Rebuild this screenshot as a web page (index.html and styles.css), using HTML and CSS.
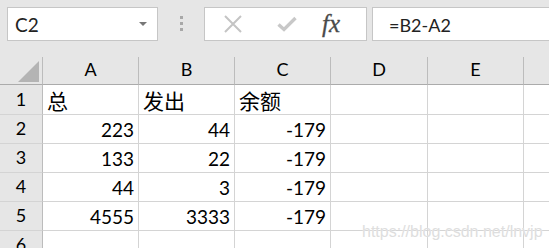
FILE: index.html
```html
<!DOCTYPE html>
<html lang="zh-CN">
<head>
    <meta charset="UTF-8">
    <title>Sheet</title>
    <link rel="stylesheet" href="styles.css">
</head>
<body>
    <div class="app">
        <div class="toolbar">
            <div class="name-box">
                <span>C2</span>
                <span class="caret"></span>
            </div>
            <div class="grip">
                <span></span><span></span><span></span>
            </div>
            <div class="fx-box">
                <svg class="icon" width="20" height="18" viewBox="0 0 20 18">
                    <path d="M2 1 L18 17 M18 1 L2 17" stroke="#c4c4c4" stroke-width="2" fill="none"/>
                </svg>
                <svg class="icon" width="20" height="16" viewBox="0 0 20 16">
                    <path d="M1.5 8.5 L7 13.5 L18.5 2" stroke="#c8c8c8" stroke-width="3.4" fill="none"/>
                </svg>
                <span class="fx">fx</span>
            </div>
            <div class="formula">=B2-A2</div>
        </div>

        <div class="sheet">
            <div class="corner"><span class="tri"></span></div>
            <div class="col-head">A</div>
            <div class="col-head">B</div>
            <div class="col-head">C</div>
            <div class="col-head">D</div>
            <div class="col-head">E</div>
            <div class="col-head last"></div>

            <div class="row-head">1</div>
            <div class="cell cjk">总</div>
            <div class="cell cjk">发出</div>
            <div class="cell cjk">余额</div>
            <div class="cell"></div>
            <div class="cell"></div>
            <div class="cell last"></div>

            <div class="row-head">2</div>
            <div class="cell num">223</div>
            <div class="cell num">44</div>
            <div class="cell num">-179</div>
            <div class="cell"></div>
            <div class="cell"></div>
            <div class="cell last"></div>

            <div class="row-head">3</div>
            <div class="cell num">133</div>
            <div class="cell num">22</div>
            <div class="cell num">-179</div>
            <div class="cell"></div>
            <div class="cell"></div>
            <div class="cell last"></div>

            <div class="row-head">4</div>
            <div class="cell num">44</div>
            <div class="cell num">3</div>
            <div class="cell num">-179</div>
            <div class="cell"></div>
            <div class="cell"></div>
            <div class="cell last"></div>

            <div class="row-head">5</div>
            <div class="cell num">4555</div>
            <div class="cell num">3333</div>
            <div class="cell num">-179</div>
            <div class="cell"></div>
            <div class="cell"></div>
            <div class="cell last"></div>

            <div class="row-head">6</div>
            <div class="cell"></div>
            <div class="cell"></div>
            <div class="cell"></div>
            <div class="cell"></div>
            <div class="cell"></div>
            <div class="cell last"></div>
        </div>

        <div class="watermark">https://blog.csdn.net/lnvjp</div>
    </div>
</body>
</html>
```

FILE: styles.css
```css
body {
    margin: 0;
    background-color: #e6e6e6;
    font-family: Lato, "Noto Sans CJK SC", sans-serif;
    color: #000;
}

.app {
    position: relative;
    width: 549px;
    height: 248px;
    overflow: hidden;
}

/* formula bar */
.toolbar {
    display: flex;
    height: 57px;
    padding: 7px 0 0 7px;
    box-sizing: border-box;
}

.name-box {
    display: flex;
    align-items: center;
    justify-content: space-between;
    width: 151px;
    height: 34px;
    box-sizing: border-box;
    padding: 0 10px 0 7px;
    background-color: #fff;
    border: 1px solid #c6c6c6;
    font-size: 19px;
    color: #222;
}

.caret {
    width: 0;
    height: 0;
    border-left: 4px solid transparent;
    border-right: 4px solid transparent;
    border-top: 4px solid #777;
}

.grip {
    display: flex;
    flex-direction: column;
    align-items: center;
    gap: 3px;
    width: 46px;
    padding-top: 9px;
    box-sizing: border-box;
}

.grip span {
    width: 3px;
    height: 3px;
    background-color: #a8a8a8;
}

.fx-box {
    display: flex;
    align-items: center;
    width: 163px;
    height: 34px;
    box-sizing: border-box;
    padding-left: 18px;
    background-color: #fff;
    border: 1px solid #c6c6c6;
}

.icon {
    margin-right: 34px;
}

.fx {
    margin-left: -9px;
    font-family: "Liberation Serif", serif;
    font-style: italic;
    font-size: 25px;
    color: #4a4a4a;
    -webkit-text-stroke: 0.3px #4a4a4a;
}

.formula {
    flex: 1;
    height: 34px;
    margin-left: 5px;
    box-sizing: border-box;
    padding: 6px 0 0 16px;
    background-color: #fff;
    border: 1px solid #c6c6c6;
    border-right: none;
    font-size: 18px;
    color: #222;
}

/* grid */
.sheet {
    display: grid;
    grid-template-columns: 43px 96px 96px 96px 97px 96px 1fr;
    grid-template-rows: 28px 30px 29px 29px 29px 29px 29px;
    background-color: #fff;
}

.corner,
.col-head,
.row-head {
    background-color: #e6e6e6;
    box-sizing: border-box;
}

.corner {
    display: flex;
    align-items: flex-end;
    justify-content: flex-end;
    padding: 0 3px 2px 0;
    border-right: 1px solid #bcbcbc;
    border-bottom: 1px solid #ababab;
}

.tri {
    width: 0;
    height: 0;
    border-left: 21px solid transparent;
    border-bottom: 21px solid #b4b4b4;
}

.col-head {
    display: flex;
    align-items: flex-end;
    justify-content: center;
    padding-bottom: 4px;
    font-size: 18px;
    border-right: 1px solid #bcbcbc;
    border-bottom: 1px solid #ababab;
}

.row-head {
    display: flex;
    align-items: flex-end;
    justify-content: center;
    padding-bottom: 4px;
    font-size: 18px;
    border-right: 1px solid #bcbcbc;
    border-bottom: 1px solid #d4d4d4;
}

.cell {
    display: flex;
    align-items: flex-end;
    padding: 0 4px 4px 4px;
    box-sizing: border-box;
    font-size: 19px;
    line-height: 1;
    border-right: 1px solid #d4d4d4;
    border-bottom: 1px solid #d4d4d4;
}

.col-head.last,
.cell.last {
    border-right: none;
}

.num {
    justify-content: flex-end;
}

.cjk {
    font-size: 21px;
    padding-bottom: 3px;
}

.watermark {
    position: absolute;
    left: 362px;
    top: 223px;
    font-family: "Liberation Sans", sans-serif;
    font-size: 16px;
    color: #dedede;
    text-shadow: 0 0 1px #fff;
}
```
